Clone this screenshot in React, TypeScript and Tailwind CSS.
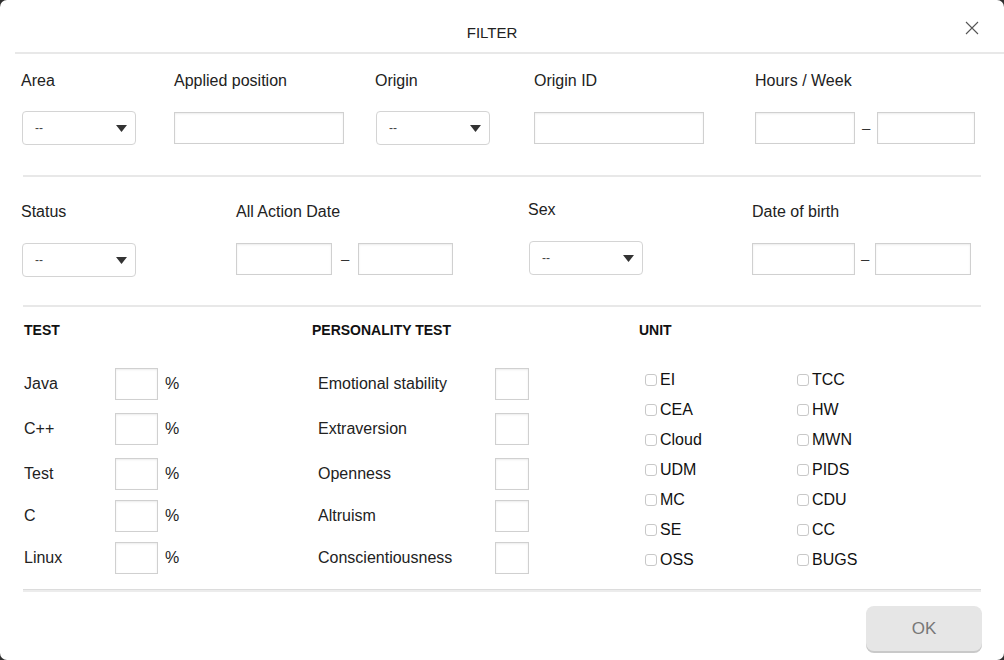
import React from 'react';

const font = { fontFamily: '"Liberation Sans", Arial, sans-serif' };

function Select({ className = '' }: { className?: string }) {
  return (
    <div
      className={`flex h-[34px] w-[114px] items-center justify-between rounded-[4px] border border-[#d4d4d4] bg-white pl-[12px] pr-[8px] ${className}`}
    >
      <span className="text-[12px] leading-none text-[#444]">--</span>
      <svg width="11" height="7" viewBox="0 0 11 7">
        <path d="M0 0 H11 L5.5 7 Z" fill="#333" />
      </svg>
    </div>
  );
}

function Input({ className = '' }: { className?: string }) {
  return (
    <div
      className={`h-[32px] border border-[#d0d0d0] bg-white shadow-[inset_0_1px_2px_rgba(0,0,0,0.08)] ${className}`}
    />
  );
}

function Range({ left, right, gap }: { left: string; right: string; gap: string }) {
  return (
    <div className="flex items-center">
      <Input className={left} />
      <span className={`text-[15px] text-[#333] ${gap}`}>–</span>
      <Input className={right} />
    </div>
  );
}

function Field({
  label,
  width,
  children,
  className = '',
}: {
  label: string;
  width: string;
  children: React.ReactNode;
  className?: string;
}) {
  return (
    <div className={`flex flex-col ${width} ${className}`}>
      <span className="h-[18px] text-[16px] leading-[18px] text-[#222]">{label}</span>
      <div className="mt-[21px] flex h-[34px] items-center">{children}</div>
    </div>
  );
}

const tests = ['Java', 'C++', 'Test', 'C', 'Linux'];
const personality = ['Emotional stability', 'Extraversion', 'Openness', 'Altruism', 'Conscientiousness'];
const rowGaps = ['', 'mt-[13px]', 'mt-[13px]', 'mt-[10px]', 'mt-[10px]'];
const unitsLeft = ['EI', 'CEA', 'Cloud', 'UDM', 'MC', 'SE', 'OSS'];
const unitsRight = ['TCC', 'HW', 'MWN', 'PIDS', 'CDU', 'CC', 'BUGS'];

function Check({ label }: { label: string }) {
  return (
    <div className="flex h-[30px] items-center">
      <span className="h-[12px] w-[12px] shrink-0 rounded-[3px] border border-[#c8c8c8] bg-white" />
      <span className="ml-[3px] text-[16px] leading-none text-[#111]">{label}</span>
    </div>
  );
}

export default function App() {
  return (
    <div className="h-[660px] w-[1004px] bg-[#2f2f2f]" style={font}>
      <div className="flex h-full w-full flex-col rounded-[7px] bg-white">
        {/* header */}
        <div className="relative h-[52px]">
          <div className="flex justify-center pr-[20px] pt-[25px] text-[15px] leading-[16px] text-[#222]">
            FILTER
          </div>
          <button className="absolute left-[965px] top-[21px] p-0">
            <svg width="14" height="14" viewBox="0 0 14 14">
              <path d="M1 1 L13 13 M13 1 L1 13" stroke="#555" strokeWidth="1.1" />
            </svg>
          </button>
        </div>
        <div className="ml-[15px] h-[2px] bg-[#e8e8e8]" />

        {/* row 1 */}
        <div className="mt-[18px] flex pl-[21px]">
          <Field label="Area" width="w-[153px]">
            <Select className="ml-[1px]" />
          </Field>
          <Field label="Applied position" width="w-[201px]">
            <Input className="w-[170px]" />
          </Field>
          <Field label="Origin" width="w-[159px]">
            <Select className="ml-[1px]" />
          </Field>
          <Field label="Origin ID" width="w-[221px]">
            <Input className="w-[170px]" />
          </Field>
          <Field label="Hours / Week" width="flex-1">
            <Range left="w-[100px]" right="w-[98px]" gap="mx-[7px]" />
          </Field>
        </div>
        <div className="mx-[23px] mt-[30px] h-[2px] bg-[#e8e8e8]" />

        {/* row 2 */}
        <div className="mt-[26px] flex pl-[21px]">
          <Field label="Status" width="w-[215px]">
            <Select className="ml-[1px] mt-[2px]" />
          </Field>
          <Field label="All Action Date" width="w-[292px]">
            <Range left="w-[96px]" right="w-[95px]" gap="mx-[9px]" />
          </Field>
          <Field label="Sex" width="w-[224px]" className="-mt-[2px]">
            <Select className="ml-[1px] mt-[2px]" />
          </Field>
          <Field label="Date of birth" width="flex-1">
            <Range left="w-[103px]" right="w-[96px]" gap="mx-[6px]" />
          </Field>
        </div>
        <div className="mx-[23px] mt-[29px] h-[2px] bg-[#e8e8e8]" />

        {/* section 3 */}
        <div className="mt-[15px] flex pl-[24px]">
          <div className="w-[288px]">
            <div className="text-[14px] font-bold leading-[16px] text-[#111]">TEST</div>
            <div className="mt-[30px] flex flex-col">
              {tests.map((t, i) => (
                <div key={t} className={`flex h-[32px] items-center ${rowGaps[i]}`}>
                  <span className="w-[91px] text-[16px] text-[#222]">{t}</span>
                  <Input className="w-[43px]" />
                  <span className="ml-[7px] text-[16px] text-[#222]">%</span>
                </div>
              ))}
            </div>
          </div>
          <div className="w-[327px]">
            <div className="text-[14px] font-bold leading-[16px] text-[#111]">PERSONALITY TEST</div>
            <div className="mt-[30px] flex flex-col pl-[6px]">
              {personality.map((t, i) => (
                <div key={t} className={`flex h-[32px] items-center ${rowGaps[i]}`}>
                  <span className="w-[177px] text-[16px] text-[#222]">{t}</span>
                  <Input className="w-[34px]" />
                </div>
              ))}
            </div>
          </div>
          <div className="flex-1">
            <div className="text-[14px] font-bold leading-[16px] text-[#111]">UNIT</div>
            <div className="mt-[27px] flex pl-[6px]">
              <div className="w-[152px]">
                {unitsLeft.map((u) => (
                  <Check key={u} label={u} />
                ))}
              </div>
              <div>
                {unitsRight.map((u) => (
                  <Check key={u} label={u} />
                ))}
              </div>
            </div>
          </div>
        </div>

        <div className="mx-[23px] mt-[14px] h-[3px] border-t border-[#dcdcdc] bg-[#ececec]" />

        <div className="mt-[14px] flex justify-end pr-[22px]">
          <button className="h-[45px] w-[116px] rounded-[8px] bg-[#e6e6e6] text-[17px] text-[#777] shadow-[0_2px_0_#c9c9c9]">
            OK
          </button>
        </div>
      </div>
    </div>
  );
}
